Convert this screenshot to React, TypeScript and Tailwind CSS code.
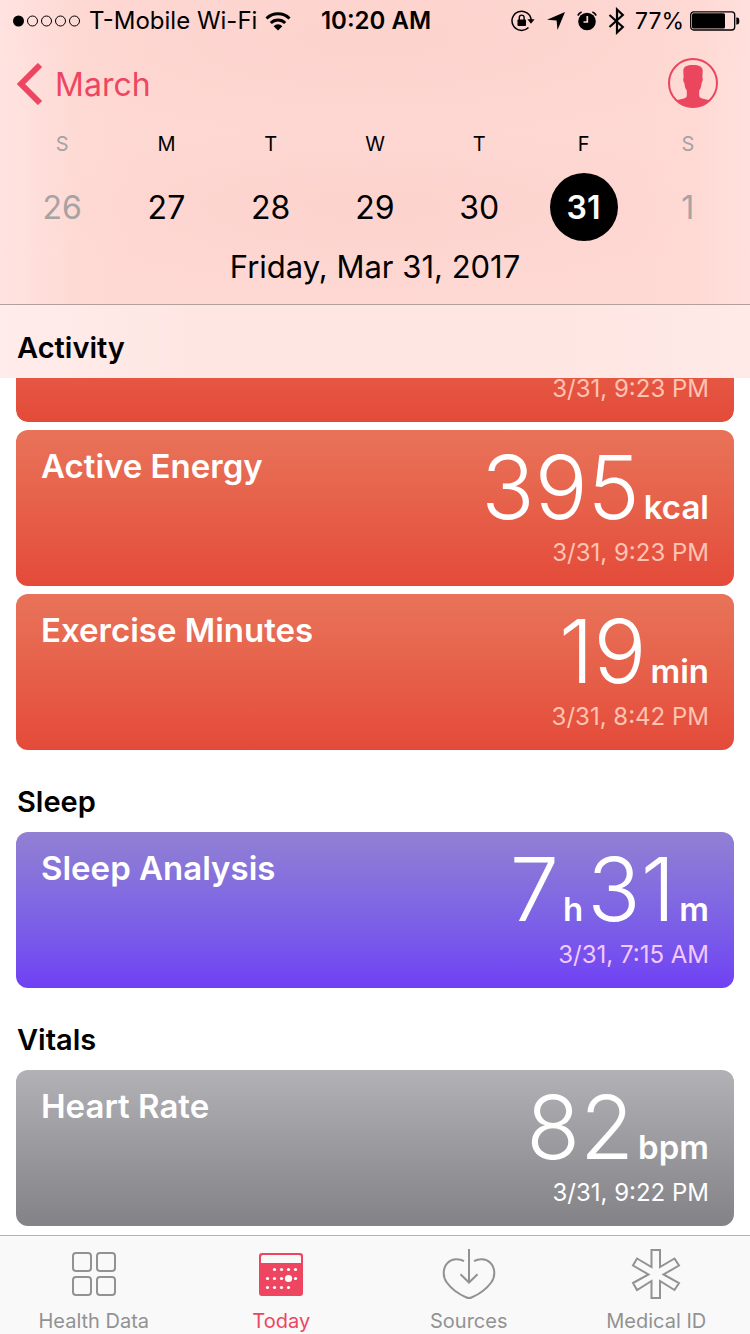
import React from "react";

type Part = { value: string; unit: string };
type Tone = "energy" | "sleep" | "vitals";

const cardTone: Record<Tone, string> = {
  energy: "bg-linear-to-b from-[#e87359] to-[#e44a39]",
  sleep: "bg-linear-to-b from-[#9180d2] to-[#703ff4]",
  vitals: "bg-linear-to-b from-[#b2b1b6] to-[#838286]",
};

const dateTone: Record<Tone, string> = {
  energy: "text-[#ffc3b2]",
  sleep: "text-[#f3c8ff]",
  vitals: "text-white",
};

function MetricCard({ title, parts = [], date, tone }: { title?: string; parts?: Part[]; date: string; tone: Tone }) {
  return (
    <article className={`flex h-[156px] shrink-0 items-stretch justify-between rounded-xl px-[25px] pb-[17px] text-white ${cardTone[tone]}`}>
      {title ? <h3 className="pt-4 text-[33px] leading-10 font-semibold">{title}</h3> : <span />}
      <div className="flex flex-col justify-end text-right">
        {parts.length > 0 && (
          <p className="flex items-baseline justify-end gap-1">
            {parts.map((p) => (
              <React.Fragment key={p.unit}>
                <span className="text-[88px] leading-[88px] font-light">{p.value}</span>
                <span className="text-[33px] leading-none font-semibold">{p.unit}</span>
              </React.Fragment>
            ))}
          </p>
        )}
        <p className={`mt-1.5 text-2xl leading-8 ${dateTone[tone]}`}>{date}</p>
      </div>
    </article>
  );
}

function SectionTitle({ children }: { children: React.ReactNode }) {
  return <h2 className="flex h-[73px] items-end px-[17px] pb-2.5 text-[29px] leading-10 font-semibold">{children}</h2>;
}

function StatusBar() {
  return (
    <div className="grid h-10 grid-cols-[1fr_auto_1fr] items-center pt-0.5 pr-2.5 pl-3 text-2xl leading-7">
      <div className="flex items-center gap-2">
        <svg width="69" height="14" viewBox="0 0 69 14" role="img" aria-label="Signal">
          <circle cx="6.5" cy="7" r="5.5" />
          {[20.5, 34.5, 48.5, 62.5].map((x) => (
            <circle key={x} cx={x} cy="7" r="5" fill="none" stroke="#000" strokeWidth="1" />
          ))}
        </svg>
        <span className="whitespace-nowrap">T-Mobile Wi-Fi</span>
        <svg width="26" height="19" viewBox="0 0 26 19" fill="none" stroke="#000" strokeWidth="3" role="img" aria-label="Wi-Fi">
          <path d="M1.5 6.5a16.5 16.5 0 0 1 23 0" />
          <path d="M5.8 11a10.3 10.3 0 0 1 14.4 0" />
          <path d="M13 18.5l-4.4-4.3a6.2 6.2 0 0 1 8.8 0z" fill="#000" stroke="none" />
        </svg>
      </div>
      <time className="px-2 font-semibold">10:20 AM</time>
      <div className="flex items-center justify-end">
        <svg width="24" height="22" viewBox="0 0 24 22" className="mr-3" role="img" aria-label="Rotation lock">
          <path d="M20.2 10A9.6 9.6 0 1 0 17.5 17.5" fill="none" stroke="#000" strokeWidth="1.5" />
          <path d="M16.4 9.3h7.2L20 13.8z" />
          <rect x="6.5" y="9.5" width="8.5" height="6.5" rx="0.8" />
          <path d="M8.3 10V7.5a2.4 2.4 0 0 1 4.8 0V10" fill="none" stroke="#000" strokeWidth="1.4" />
        </svg>
        <svg width="18" height="18" viewBox="0 0 18 18" className="mr-3" role="img" aria-label="Location">
          <path d="M18 0L10.5 18L9.6 8.6L0 7.8z" />
        </svg>
        <svg width="20" height="20" viewBox="0 0 20 20" className="mr-2.5" role="img" aria-label="Alarm">
          <circle cx="10" cy="10.5" r="8.8" />
          <path d="M.8 4.5A8 8 0 0 1 4.6 1M19.2 4.5A8 8 0 0 0 15.4 1" fill="none" stroke="#000" strokeWidth="1.6" />
          <path d="M10.3 5v6H6.5" fill="none" stroke="#fdd6d0" strokeWidth="1.7" />
        </svg>
        <svg width="18" height="28" viewBox="0 0 18 28" className="mr-2.5" fill="none" stroke="#000" strokeWidth="2.2" role="img" aria-label="Bluetooth">
          <path d="M2.5 8L15.8 20L10 25.5V2.5L15.8 8L2.5 20" />
        </svg>
        <span className="mr-1.5 text-[23px]">77%</span>
        <svg width="50" height="20" viewBox="0 0 50 20" role="img" aria-label="Battery">
          <rect x="0.7" y="0.8" width="44" height="18.2" rx="3" fill="none" stroke="#000" strokeWidth="1.3" />
          <rect x="2" y="2.2" width="33" height="15.4" rx="1.5" />
          <path d="M46.3 6.5c2.8 0 3 1.5 3 3.5s-.2 3.5-3 3.5z" />
        </svg>
      </div>
    </div>
  );
}

const days = [
  { letter: "S", day: "26", state: "off" },
  { letter: "M", day: "27", state: "on" },
  { letter: "T", day: "28", state: "on" },
  { letter: "W", day: "29", state: "on" },
  { letter: "T", day: "30", state: "on" },
  { letter: "F", day: "31", state: "selected" },
  { letter: "S", day: "1", state: "off" },
];

const dayTone: Record<string, string> = {
  off: "text-[#a5a3a3]",
  on: "text-black",
  selected: "bg-black font-semibold text-white",
};

function HealthDataIcon() {
  return (
    <svg width="52" height="52" viewBox="0 0 52 52" fill="none" stroke="currentColor" strokeWidth="2" aria-hidden="true">
      <rect x="5" y="5" width="18" height="18" rx="3" />
      <rect x="29" y="5" width="18" height="18" rx="3" />
      <rect x="5" y="29" width="18" height="18" rx="3" />
      <rect x="29" y="29" width="18" height="18" rx="3" />
    </svg>
  );
}

function TodayIcon() {
  const dots = [
    [19.5, 21.5], [26.5, 21.5], [33.5, 21.5], [40.5, 21.5],
    [12.5, 30.5], [19.5, 30.5], [26.5, 30.5], [40.5, 30.5],
    [12.5, 39.5], [19.5, 39.5], [26.5, 39.5], [33.5, 39.5],
  ];
  return (
    <svg width="52" height="52" viewBox="0 0 52 52" fill="currentColor" aria-hidden="true">
      <rect x="4" y="5" width="44" height="43" rx="3" />
      <path d="M6 15V9q0-2 2-2h36q2 0 2 2v6z" fill="#f9f9f9" />
      {dots.map(([x, y]) => (
        <circle key={`${x}-${y}`} cx={x} cy={y} r="1.6" fill="#fff" />
      ))}
      <circle cx="33.5" cy="30.5" r="3.6" fill="#fff" />
    </svg>
  );
}

function SourcesIcon() {
  return (
    <svg width="54" height="52" viewBox="0 0 54 52" fill="none" stroke="currentColor" strokeWidth="2" aria-hidden="true">
      <path d="M22 13.2C17.5 10.4 10.5 10.3 6 14.5C.5 19.8 .5 28.5 4.8 34.5C9.5 41 17.5 46.5 24.5 49.5Q27 50.6 29.5 49.5C36.5 46.5 44.5 41 49.2 34.5C53.5 28.5 53.5 19.8 48 14.5C43.5 10.3 36.5 10.4 32 13.2" />
      <path d="M27 1v33.5M18.5 26.2L27 34.5l8.5-8.3" />
    </svg>
  );
}

function MedicalIcon() {
  return (
    <svg width="50" height="52" viewBox="0 0 50 52" fill="none" stroke="currentColor" strokeWidth="2" aria-hidden="true">
      <path d="M20.5 2h8.5v17L43.5 10.5l4.500 7L32.500 26.500L48 35l-4.500 7L29 33v17h-8.500V33L6 42L2 35l15.500-8.500L2 17.500l4-7L20.500 19z" />
    </svg>
  );
}

const tabs = [
  { label: "Health Data", Icon: HealthDataIcon, active: false },
  { label: "Today", Icon: TodayIcon, active: true },
  { label: "Sources", Icon: SourcesIcon, active: false },
  { label: "Medical ID", Icon: MedicalIcon, active: false },
];

export default function App() {
  return (
    <div className="flex min-h-screen flex-col bg-white font-['Inter',sans-serif] text-black">
      <header className="flex flex-col border-b border-[#b2a09e] bg-[radial-gradient(ellipse_45%_28%_at_50%_68%,#fcd0cab0,#fcd0ca00),radial-gradient(ellipse_50%_35%_at_50%_12%,#fcd0cab0,#fcd0ca00),linear-gradient(90deg,#ffe3e0_0%,#fedad5_10%,#fed8d3_20%,#fed8d3_85%,#ffdad5_93%,#ffe0dc_100%)]">
        <StatusBar />
        <div className="flex h-[88px] items-center justify-between pr-8 pb-0.5 pl-4">
          <button type="button" className="flex items-center gap-3 pt-0.5 text-[32px] leading-10 text-[#ee4660]">
            <svg width="27" height="42" viewBox="0 0 27 42" fill="none" stroke="currentColor" strokeWidth="6" aria-hidden="true">
              <path d="M24 2L5 21L24 40" />
            </svg>
            <span className="pt-0.5">March</span>
          </button>
          <button type="button" aria-label="Profile" className="text-[#ea475f]">
            <svg width="50" height="50" viewBox="0 0 50 50" fill="currentColor" aria-hidden="true">
              <circle cx="25" cy="25" r="24" fill="none" stroke="currentColor" strokeWidth="2" />
              <path d="M15.3 12.5C15.5 8.5 19 7 25 7s9.5 1.5 9.7 5.5L34.4 20c.8.5.4 4-.8 5-.3 3.5-.8 5.5-2.400 7.500v5.500c.8 2.800 5.800 3 10.300 4.300C37 47 31.500 49.500 25 49.500S13 47 8.500 42.300c4.500-1.300 9.500-1.500 10.300-4.300v-5.500c-1.600-2-2.100-4-2.400-7.500-1.200-1-1.600-4.500-.8-5z" />
            </svg>
          </button>
        </div>
        <div className="grid grid-cols-7 px-2.5">
          {days.map((d) => (
            <button type="button" key={d.day} className={`flex flex-col items-center gap-[13px] ${d.state === "off" ? "text-[#a5a3a3]" : "text-black"}`}>
              <span className="text-xl leading-8">{d.letter}</span>
              <span className={`flex size-[68px] items-center justify-center rounded-full pt-0.5 text-[32px] leading-10 ${dayTone[d.state]}`}>{d.day}</span>
            </button>
          ))}
        </div>
        <p className="pt-1.5 pb-[17px] text-center text-[31px] leading-10">Friday, Mar 31, 2017</p>
      </header>

      <main className="flex flex-col">
        <div className="bg-[linear-gradient(90deg,#ffeceb_0%,#fee7e3_25%,#fee6e2_75%,#ffeae8_100%)]">
          <SectionTitle>Activity</SectionTitle>
        </div>
        <div className="flex flex-col gap-2 px-4">
          <div className="flex h-11 flex-col justify-end overflow-hidden rounded-b-xl">
            <MetricCard date="3/31, 9:23 PM" tone="energy" />
          </div>
          <MetricCard title="Active Energy" parts={[{ value: "395", unit: "kcal" }]} date="3/31, 9:23 PM" tone="energy" />
          <MetricCard title="Exercise Minutes" parts={[{ value: "19", unit: "min" }]} date="3/31, 8:42 PM" tone="energy" />
        </div>
        <div className="pt-[9px]">
          <SectionTitle>Sleep</SectionTitle>
          <div className="px-4">
            <MetricCard title="Sleep Analysis" parts={[{ value: "7", unit: "h" }, { value: "31", unit: "m" }]} date="3/31, 7:15 AM" tone="sleep" />
          </div>
        </div>
        <div className="py-[9px]">
          <SectionTitle>Vitals</SectionTitle>
          <div className="px-4">
            <MetricCard title="Heart Rate" parts={[{ value: "82", unit: "bpm" }]} date="3/31, 9:22 PM" tone="vitals" />
          </div>
        </div>
      </main>

      <nav className="mt-auto grid grid-cols-4 border-t border-[#b2b2b2] bg-[#f9f9f9] pt-3">
        {tabs.map(({ label, Icon, active }) => (
          <a key={label} href="#" aria-current={active ? "page" : undefined} className={`flex flex-col items-center gap-2 ${active ? "text-[#ee4660]" : "text-[#929292]"}`}>
            <Icon />
            <span className="text-xl leading-[26px]">{label}</span>
          </a>
        ))}
      </nav>
    </div>
  );
}
